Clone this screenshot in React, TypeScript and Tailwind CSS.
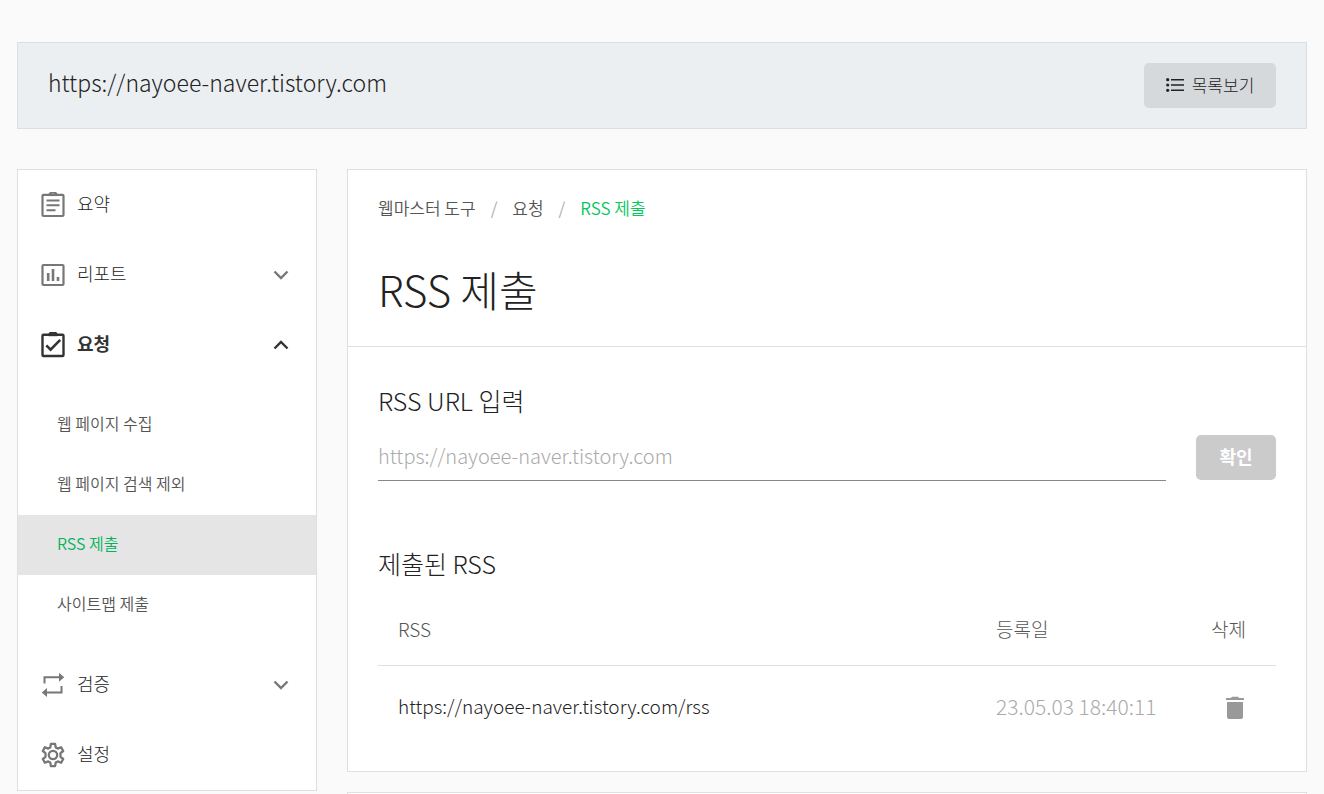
import React, { useState } from "react";

function ListIcon() {
  return (
    <svg width="18" height="14" viewBox="0 0 18 14" fill="currentColor" aria-hidden="true">
      <circle cx="1.7" cy="1.7" r="1.6" />
      <circle cx="1.7" cy="7" r="1.6" />
      <circle cx="1.7" cy="12.3" r="1.6" />
      <path d="M5 1h13v1.6H5zM5 6.2h13v1.6H5zM5 11.4h13V13H5z" />
    </svg>
  );
}

function SummaryIcon() {
  return (
    <svg width="24" height="26" viewBox="0 0 24 26" fill="none" stroke="currentColor" strokeWidth="2.2" aria-hidden="true">
      <rect x="1.5" y="2.8" width="21" height="21.2" rx="1" />
      <path strokeWidth="2.6" d="M7.5 2.8h9" />
      <path strokeWidth="2" d="M5.5 8.5h13M5.5 13.3h13M5.5 18.3h9" />
      <path d="M9 2.4a3 2.2 0 0 1 6 0" />
    </svg>
  );
}

function ReportIcon() {
  return (
    <svg width="24" height="26" viewBox="0 0 24 26" fill="none" stroke="currentColor" strokeWidth="2.2" aria-hidden="true">
      <rect x="1.5" y="3" width="21" height="20" rx="1" />
      <path strokeWidth="2.6" d="M7.2 11v8M12 7v12M17 15v4" />
    </svg>
  );
}

function RequestIcon() {
  return (
    <svg width="24" height="26" viewBox="0 0 24 26" fill="none" stroke="currentColor" strokeWidth="2.4" aria-hidden="true">
      <rect x="1.5" y="2.8" width="21" height="21.2" rx="1" />
      <path strokeWidth="2.8" d="M7.5 2.8h9" />
      <path d="M9 2.4a3 2.2 0 0 1 6 0" />
      <path strokeWidth="2.6" d="M5.3 13.4l4.3 4.3 9.6-9.8" />
    </svg>
  );
}

function VerifyIcon() {
  return (
    <svg width="24" height="26" viewBox="0 0 24 26" aria-hidden="true">
      <path fill="none" stroke="currentColor" strokeWidth="2" d="M3.5 11.5V5.3H18M20.5 14V20.4H6" />
      <path fill="currentColor" d="M18 .8L23.2 5.3 18 9.8zM6 15.9L.8 20.4 6 24.9z" />
    </svg>
  );
}

function SettingsIcon() {
  return (
    <svg className="shrink-0" width="26" height="26" viewBox="0 0 26 26" fill="none" stroke="currentColor" strokeWidth="2.3" strokeLinejoin="round" aria-hidden="true">
      <circle cx="13" cy="13" r="4.2" />
      <path d="M10.9 1.9h4.2l.6 3.5 2.1 1.2 3.3-1.3 2.1 3.7-2.7 2.2v3.6l2.7 2.2-2.1 3.7-3.3-1.3-2.1 1.2-.6 3.5h-4.2l-.6-3.5-2.1-1.2-3.3 1.3L2.8 17l2.7-2.2v-3.6L2.8 9l2.1-3.7 3.3 1.3 2.1-1.2z" />
    </svg>
  );
}

function Chevron({ up = false }: { up?: boolean }) {
  return (
    <svg width="16" height="10" viewBox="0 0 16 10" fill="none" stroke="currentColor" strokeWidth="2.4" aria-hidden="true">
      <path d={up ? "M1.5 8.5L8 2l6.5 6.5" : "M1.5 1.5L8 8l6.5-6.5"} />
    </svg>
  );
}

function TrashIcon() {
  return (
    <svg width="20" height="24" viewBox="0 0 20 24" fill="currentColor" aria-hidden="true">
      <path d="M1 2h4.8L7 .8h6L14.2 2H19v2H1zM2 6h16v15a2 2 0 0 1-2 2H4a2 2 0 0 1-2-2z" />
    </svg>
  );
}

type MenuItem = {
  label: string;
  icon: React.ReactNode;
  children?: string[];
  expandable?: boolean;
};

const menu: MenuItem[] = [
  { label: "요약", icon: <SummaryIcon /> },
  { label: "리포트", icon: <ReportIcon />, expandable: true },
  {
    label: "요청",
    icon: <RequestIcon />,
    expandable: true,
    children: ["웹 페이지 수집", "웹 페이지 검색 제외", "RSS 제출", "사이트맵 제출"],
  },
  { label: "검증", icon: <VerifyIcon />, expandable: true },
  { label: "설정", icon: <SettingsIcon /> },
];

function Sidebar() {
  return (
    <nav className="w-[300px] shrink-0 border border-[#dfdfdf] bg-white">
      <ul>
        {menu.map((item) => {
          const open = Boolean(item.children);
          const row = (
            <>
              <span className={open ? "flex w-6 justify-center text-[#333]" : "flex w-6 justify-center text-[#777]"}>
                {item.icon}
              </span>
              <span className={open ? "flex-1 pb-1 font-bold text-[#333]" : "flex-1 pb-1"}>{item.label}</span>
              {item.expandable && (
                <span className={open ? "text-[#333]" : "text-[#777]"}>
                  <Chevron up={open} />
                </span>
              )}
            </>
          );
          return (
            <li key={item.label}>
              {item.expandable ? (
                <button
                  type="button"
                  aria-expanded={open}
                  className="flex h-[70px] w-full items-center gap-3 pr-[27px] pl-[23px] text-left text-lg text-[#222]"
                >
                  {row}
                </button>
              ) : (
                <a href="#" className="flex h-[70px] items-center gap-3 pr-[27px] pl-[23px] text-lg text-[#222]">
                  {row}
                </a>
              )}
              {item.children && (
                <ul className="py-[15px]">
                  {item.children.map((child) => (
                    <li key={child}>
                      <a
                        href="#"
                        className={
                          child === "RSS 제출"
                            ? "flex h-[60px] items-center bg-[#e5e5e5] px-[39px] pb-1 text-base font-[350] text-[#03b35a]"
                            : "flex h-[60px] items-center px-[39px] pb-1 text-base font-[350] text-[#555]"
                        }
                      >
                        {child}
                      </a>
                    </li>
                  ))}
                </ul>
              )}
            </li>
          );
        })}
      </ul>
    </nav>
  );
}

export default function App() {
  const [url, setUrl] = useState("");
  return (
    <div className="h-screen overflow-hidden bg-[#fafafa] px-[17px] pt-[42px] font-['Noto_Sans_CJK_KR',sans-serif] font-light text-[#222]">
      <header className="flex items-center justify-between border border-[#dcdfe1] bg-[#ebeff2] px-[30px] py-5">
        <p className="pb-2 text-[23px] leading-8">https://nayoee-naver.tistory.com</p>
        <button
          type="button"
          className="flex h-[45px] w-[132px] items-center justify-center gap-2 rounded-[5px] bg-[#d5d9dc] pb-0.5 text-[17px] text-[#222]"
        >
          <ListIcon />
          목록보기
        </button>
      </header>

      <div className="mt-10 flex items-start gap-[30px]">
        <Sidebar />
        <div className="flex min-w-0 flex-1 flex-col gap-5">
          <main className="border border-[#dfdfdf] bg-white">
            <div className="border-b border-[#dfdfdf] px-[30px] pt-[26px] pb-[27px]">
              <nav className="flex gap-[15px] text-[17px] leading-6 font-[350] text-[#555]">
                <a href="#">웹마스터 도구</a>
                <span className="text-[#aaa]">/</span>
                <a href="#">요청</a>
                <span className="text-[#aaa]">/</span>
                <a href="#" className="text-[#03c75a]">RSS 제출</a>
              </nav>
              <h1 className="mt-[39px] text-[42px] leading-[60px]">RSS 제출</h1>
            </div>

            <section className="px-[30px] pt-[35px]">
              <h2 className="text-[25px] leading-9">
                <label htmlFor="rss-url">RSS URL 입력</label>
              </h2>
              <form className="mt-[17px] flex gap-[30px]" onSubmit={(e) => e.preventDefault()}>
                <input
                  id="rss-url"
                  type="text"
                  value={url}
                  onChange={(e) => setUrl(e.target.value)}
                  placeholder="https://nayoee-naver.tistory.com"
                  className="h-[46px] min-w-0 flex-1 border-b border-[#888] bg-transparent pb-1 text-xl outline-none placeholder:text-[#aaa]"
                />
                <button type="submit" className="h-[45px] w-20 rounded-[5px] bg-[#cbcbcb] pb-1 text-lg font-bold text-white">
                  확인
                </button>
              </form>
            </section>

            <section className="px-[30px] pt-16 pb-5">
              <h2 className="text-[25px] leading-9">제출된 RSS</h2>
              <table className="mt-[13px] w-full table-fixed">
                <thead>
                  <tr className="h-[71px] border-b border-[#dfdfdf] text-left text-[19px] text-[#555]">
                    <th scope="col" className="px-5 font-light">RSS</th>
                    <th scope="col" className="w-[200px] px-5 font-light">등록일</th>
                    <th scope="col" className="w-[100px] pr-[30px] text-right font-light">삭제</th>
                  </tr>
                </thead>
                <tbody>
                  <tr className="h-[86px] text-[19px]">
                    <td className="px-5 pb-1">https://nayoee-naver.tistory.com/rss</td>
                    <td className="pb-1 pl-5 text-[21px] whitespace-nowrap text-[#aaa]">23.05.03 18:40:11</td>
                    <td className="pr-[31px]">
                      <button type="button" aria-label="삭제" className="ml-auto flex text-[#999]">
                        <TrashIcon />
                      </button>
                    </td>
                  </tr>
                </tbody>
              </table>
            </section>
          </main>
          <section className="h-[100px] border border-[#dfdfdf] bg-white" />
        </div>
      </div>
    </div>
  );
}
